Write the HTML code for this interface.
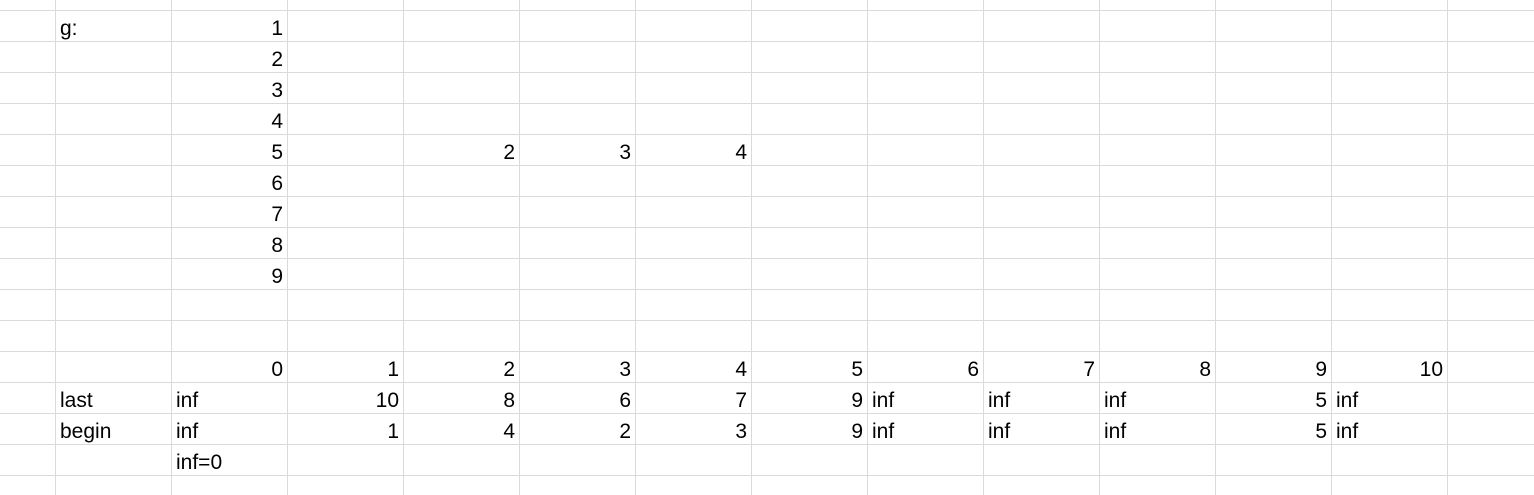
<!DOCTYPE html>
<html><head><style>
body{margin:0;width:1534px;height:495px;overflow:hidden;background:#fff;position:relative;font-family:"Liberation Sans",sans-serif;font-size:21px;color:#000}
.g{position:absolute;left:0;top:0;width:1534px;height:495px;
background-image:linear-gradient(to right,#dadada 1px,transparent 1px),linear-gradient(to bottom,#dadada 1px,transparent 1px);
background-size:116px 100%,100% 31px;background-position:55px 0,0 10px}
.c{position:absolute;height:31px;line-height:38px;width:110px;white-space:nowrap}
.r{text-align:right}
</style></head><body><div class="g"></div>
<div id="t"></div>
<script>
var t=document.getElementById('t'),h='';
function p(row,col,txt,right){var top=10+31*row;var l=55+116*col;
h+='<div class="c'+(right?' r':'')+'" style="top:'+top+'px;left:'+(right?l+2:l+5)+'px">'+txt+'</div>';}
p(0,0,'g:',0);
for(var i=0;i<9;i++)p(i,1,String(i+1),1);
p(4,3,'2',1);p(4,4,'3',1);p(4,5,'4',1);
for(var i=0;i<=10;i++)p(11,i+1,String(i),1);
p(12,0,'last',0);p(12,1,'inf',0);p(12,2,'10',1);p(12,3,'8',1);p(12,4,'6',1);p(12,5,'7',1);p(12,6,'9',1);
p(12,7,'inf',0);p(12,8,'inf',0);p(12,9,'inf',0);p(12,10,'5',1);p(12,11,'inf',0);
p(13,0,'begin',0);p(13,1,'inf',0);p(13,2,'1',1);p(13,3,'4',1);p(13,4,'2',1);p(13,5,'3',1);p(13,6,'9',1);
p(13,7,'inf',0);p(13,8,'inf',0);p(13,9,'inf',0);p(13,10,'5',1);p(13,11,'inf',0);
p(14,1,'inf=0',0);
t.innerHTML=h;
</script>
</body></html>
